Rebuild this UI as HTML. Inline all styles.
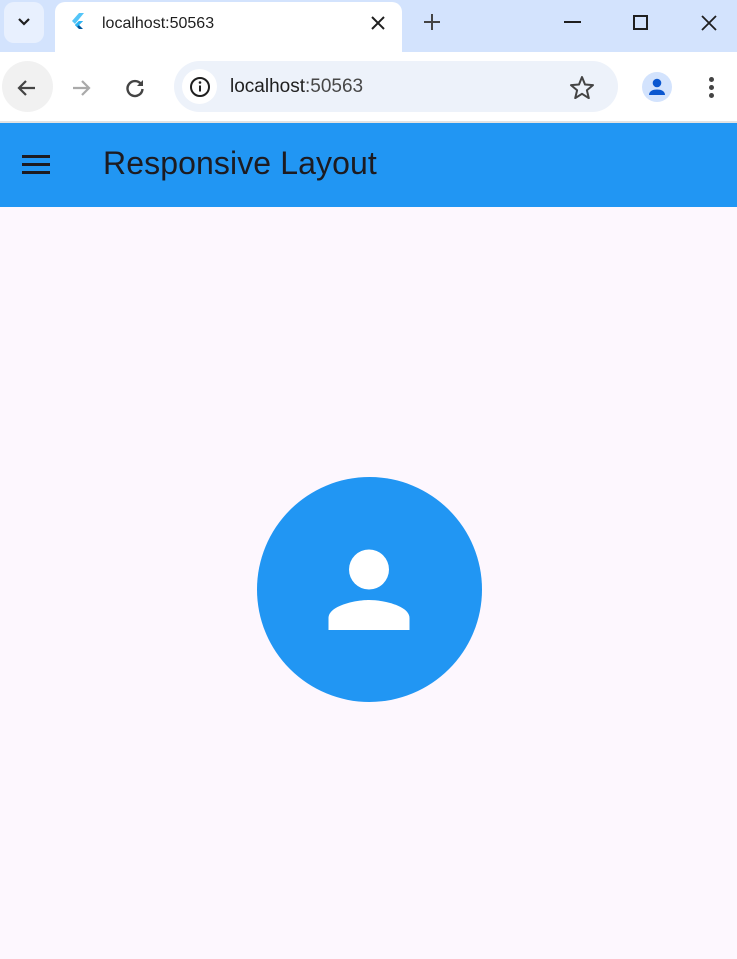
<!DOCTYPE html>
<html><head><style>
*{margin:0;padding:0;box-sizing:border-box}
body{width:737px;height:959px;overflow:hidden;background:#fdf7fe;font-family:"Liberation Sans",sans-serif;position:relative}
.abs{position:absolute}
</style></head><body>
<div class="abs" style="left:0;top:0;width:737px;height:52px;background:#d3e3fd"></div>
<div class="abs" style="left:4px;top:2px;width:40px;height:41px;border-radius:10px;background:#e8f0fe"></div>
<svg class="abs" style="left:16px;top:16px" width="16" height="12" viewBox="0 0 16 12"><path d="M3 3l5 5 5-5" stroke="#1f1f1f" stroke-width="2.2" fill="none"/></svg>
<div class="abs" style="left:55px;top:2px;width:347px;height:52px;background:#fff;border-radius:10px 10px 0 0"></div>
<svg class="abs" style="left:70px;top:12px" width="16" height="20" viewBox="0 0 16 20"><path d="M9 1L2 9l3 3 9-11z" fill="#54c5f8"/><path d="M9 9l-4 4 4 4h4l-4-4 4-4z" fill="#01579b"/><path d="M5 13l4-4h4l-6 6z" fill="#29b6f6"/></svg>
<div class="abs" style="left:102px;top:15px;font-size:16px;color:#1f1f1f">localhost:50563</div>
<svg class="abs" style="left:370px;top:15px" width="16" height="16" viewBox="0 0 16 16"><path d="M2 2l12 12M14 2L2 14" stroke="#1f1f1f" stroke-width="2"/></svg>
<svg class="abs" style="left:423px;top:13px" width="18" height="18" viewBox="0 0 18 18"><path d="M9 1v16M1 9h16" stroke="#444" stroke-width="2"/></svg>
<div class="abs" style="left:564px;top:21px;width:17px;height:2px;background:#1f1f1f"></div>
<div class="abs" style="left:633px;top:15px;width:15px;height:15px;border:2px solid #1f1f1f"></div>
<svg class="abs" style="left:701px;top:15px" width="16" height="16" viewBox="0 0 16 16"><path d="M1 1l14 14M15 1L1 15" stroke="#1f1f1f" stroke-width="1.8"/></svg>
<div class="abs" style="left:0;top:52px;width:737px;height:69px;background:#fff"></div>
<div class="abs" style="left:2px;top:61px;width:51px;height:51px;border-radius:50%;background:#f1f1f1"></div>
<svg class="abs" style="left:15px;top:76px" width="24" height="24" viewBox="0 0 24 24"><path d="M20 12H5M11 5l-7 7 7 7" stroke="#444" stroke-width="2.2" fill="none"/></svg>
<svg class="abs" style="left:69px;top:76px" width="24" height="24" viewBox="0 0 24 24"><path d="M4 12h15M13 5l7 7-7 7" stroke="#aaa" stroke-width="2.2" fill="none"/></svg>
<svg class="abs" style="left:123px;top:76px" width="24" height="24" viewBox="0 0 24 24"><path d="M18 8a7.5 7.5 0 1 0 1.5 5" stroke="#444" stroke-width="2.4" fill="none"/><path d="M20 4v6h-6z" fill="#444"/></svg>
<div class="abs" style="left:174px;top:61px;width:444px;height:51px;border-radius:26px;background:#edf2fa"></div>
<div class="abs" style="left:182px;top:69px;width:35px;height:35px;border-radius:50%;background:#fff"></div>
<svg class="abs" style="left:189px;top:76px" width="22" height="22" viewBox="0 0 22 22"><circle cx="11" cy="11" r="9" stroke="#1f1f1f" stroke-width="2" fill="none"/><path d="M11 9.5v6" stroke="#1f1f1f" stroke-width="2"/><circle cx="11" cy="6.5" r="1.3" fill="#1f1f1f"/></svg>
<div class="abs" style="left:230px;top:76px;font-size:19px;color:#1f1f1f">localhost<span style="color:#474747">:50563</span></div>
<svg class="abs" style="left:569px;top:75px" width="26" height="24" viewBox="0 0 26 24"><path d="M13 2l3 7.5 8 .6-6.1 5.2 1.9 7.8L13 18.8 6.2 23.1l1.9-7.8L2 10.1l8-.6z" stroke="#444" stroke-width="2" fill="none" stroke-linejoin="round"/></svg>
<div class="abs" style="left:642px;top:72px;width:30px;height:30px;border-radius:50%;background:#d3e3fd"></div>
<svg class="abs" style="left:646px;top:76px" width="22" height="22" viewBox="0 0 22 22"><circle cx="11" cy="7" r="4.3" fill="#0b57d0"/><path d="M3 19c0-4 4-5.5 8-5.5s8 1.5 8 5.5z" fill="#0b57d0"/></svg>
<div class="abs" style="left:709px;top:77px;width:5px;height:5px;border-radius:50%;background:#444"></div>
<div class="abs" style="left:709px;top:85px;width:5px;height:5px;border-radius:50%;background:#444"></div>
<div class="abs" style="left:709px;top:93px;width:5px;height:5px;border-radius:50%;background:#444"></div>
<div class="abs" style="left:0;top:121px;width:737px;height:2px;background:#e3e3e3"></div>
<div class="abs" style="left:0;top:123px;width:737px;height:84px;background:#2196f3"></div>
<div class="abs" style="left:22px;top:155px;width:28px;height:3px;background:#1d1b20"></div>
<div class="abs" style="left:22px;top:163px;width:28px;height:3px;background:#1d1b20"></div>
<div class="abs" style="left:22px;top:171px;width:28px;height:3px;background:#1d1b20"></div>
<div class="abs" style="left:103px;top:145px;font-size:32px;letter-spacing:0.1px;color:#1d1b20;white-space:nowrap">Responsive Layout</div>
<div class="abs" style="left:256.5px;top:477px;width:225px;height:225px;border-radius:50%;background:#2196f3"></div>
<svg class="abs" style="left:320px;top:545px" width="98" height="90" viewBox="320 545 98 90"><circle cx="369" cy="569.5" r="20" fill="#fff"/><path d="M328.5 630V618c0-12 26-18 40.5-18s40.5 6 40.5 18V630z" fill="#fff"/></svg>
</body></html>
